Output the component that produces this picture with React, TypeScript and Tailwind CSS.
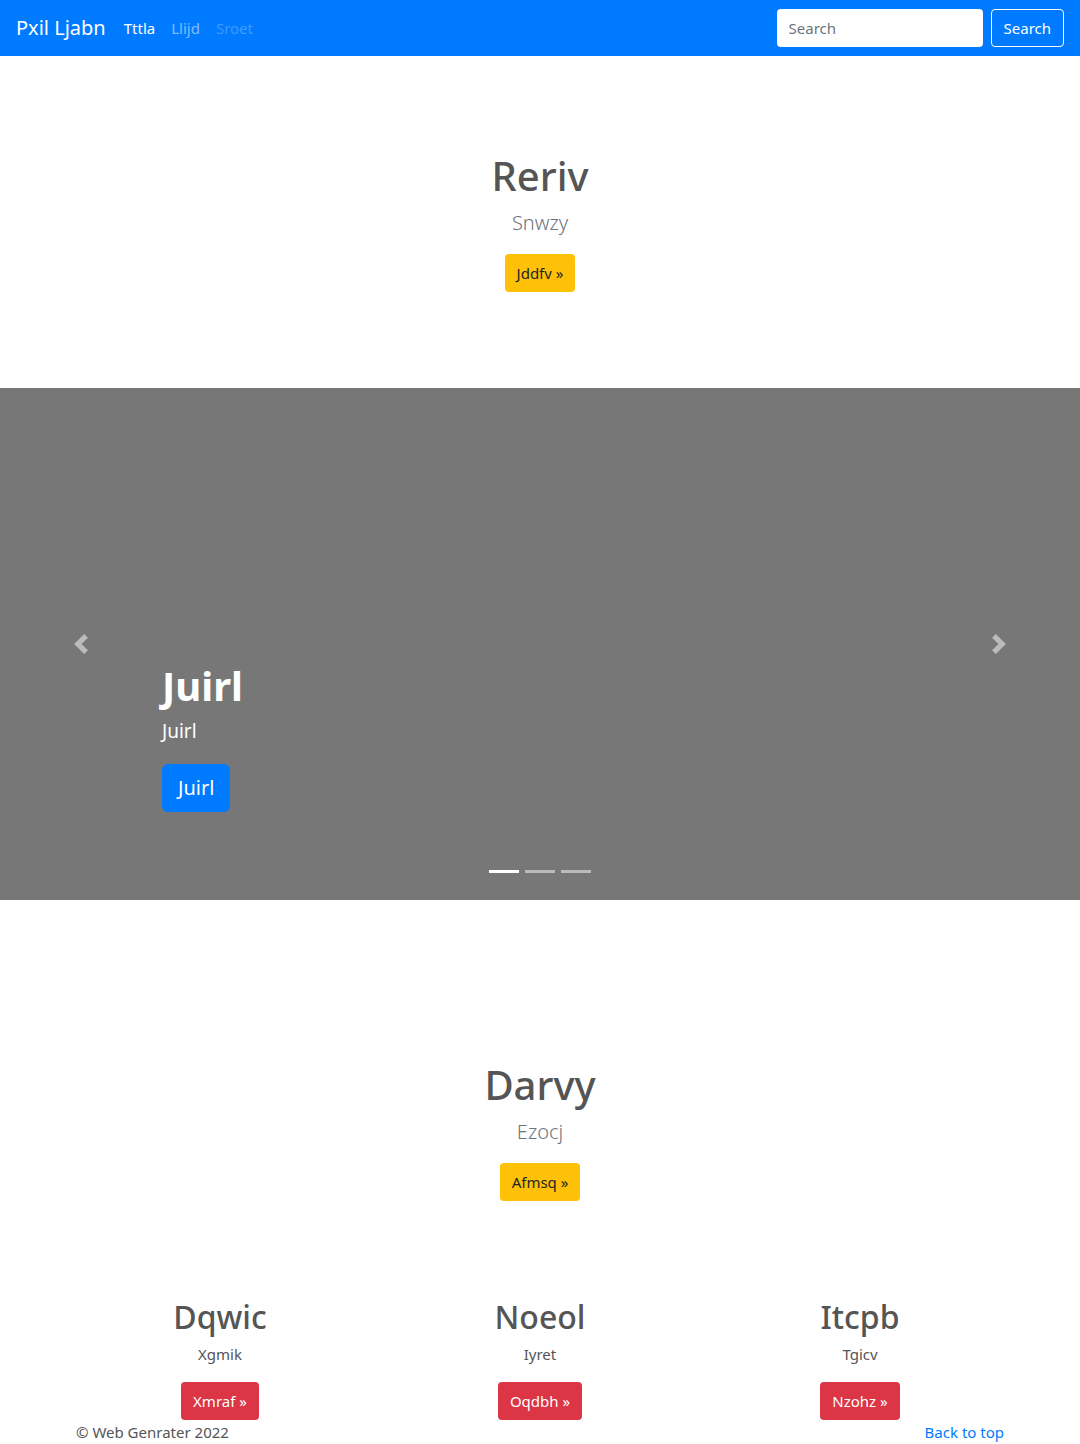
const font = "font-['Segoe_UI','Noto_Sans',sans-serif]";

type Col = { title: string; text: string; btn: string };

const COLS: Col[] = [
  { title: "Dqwic", text: "Xgmik", btn: "Xmraf »" },
  { title: "Noeol", text: "Iyret", btn: "Oqdbh »" },
  { title: "Itcpb", text: "Tgicv", btn: "Nzohz »" },
];

function Chevron({ dir }: { dir: "prev" | "next" }) {
  return (
    <svg width="20" height="20" viewBox="0 0 8 8" fill="#fff" className="opacity-50">
      {dir === "prev" ? (
        <path d="M5.25 0l-4 4 4 4 1.5-1.5L4.25 4l2.5-2.5L5.25 0z" />
      ) : (
        <path d="M2.75 0l-1.5 1.5L3.75 4l-2.5 2.5L2.75 8l4-4-4-4z" />
      )}
    </svg>
  );
}

function Hero({ title, lead, btn }: { title: string; lead: string; btn: string }) {
  return (
    <div className="flex flex-col items-center">
      <h1 className="text-[40px] leading-[48px] font-medium text-[#555] mb-2">{title}</h1>
      <p className="text-[20px] leading-[30px] font-light text-[#6c757d] mb-4">{lead}</p>
      <button className="h-[38px] px-3 rounded bg-[#ffc107] text-[#212529] text-[15px]">{btn}</button>
    </div>
  );
}

export default function App() {
  return (
    <div className={`${font} bg-white w-[1080px] h-[1444px] overflow-hidden`}>
      <nav className="h-14 bg-[#007bff] flex items-center px-4">
        <span className="text-white text-[20px] mr-[18px]">Pxil Ljabn</span>
        <div className="flex gap-4 text-[15px]">
          <span className="text-white">Tttla</span>
          <span className="text-white/50">Llijd</span>
          <span className="text-white/25">Sroet</span>
        </div>
        <div className="ml-auto flex items-center gap-2">
          <input
            placeholder="Search"
            className="w-[206px] h-[38px] rounded bg-white px-3 text-[15px] text-[#495057] placeholder:text-[#6c757d] outline-none"
          />
          <button className="h-[38px] px-3 rounded border border-white text-white text-[15px]">Search</button>
        </div>
      </nav>

      <section className="pt-24 pb-24">
        <Hero title="Reriv" lead="Snwzy" btn="Jddfv »" />
      </section>

      <div className="relative h-[512px] bg-[#777] flex items-center">
        <div className="w-[162px] flex justify-center">
          <Chevron dir="prev" />
        </div>
        <div className="flex-1" />
        <div className="w-[162px] flex justify-center">
          <Chevron dir="next" />
        </div>
        <div className="absolute left-[162px] bottom-[88px] flex flex-col items-start text-white">
          <h1 className="text-[40px] leading-[48px] font-bold mb-1.5">Juirl</h1>
          <p className="text-[19px] leading-[30px] mb-[18px]">Juirl</p>
          <button className="h-12 px-4 rounded-md bg-[#007bff] text-white text-[20px]">Juirl</button>
        </div>
        <div className="absolute bottom-[27px] left-0 right-0 flex justify-center gap-1.5">
          <span className="w-[30px] h-[3px] bg-white" />
          <span className="w-[30px] h-[3px] bg-white/50" />
          <span className="w-[30px] h-[3px] bg-white/50" />
        </div>
      </div>

      <section className="pt-[161px] pb-[97px]">
        <Hero title="Darvy" lead="Ezocj" btn="Afmsq »" />
      </section>

      <div className="w-[960px] mx-auto grid grid-cols-3">
        {COLS.map((c) => (
          <div key={c.title} className="flex flex-col items-center px-4">
            <h2 className="text-[32px] leading-[38px] font-medium text-[#555] mb-1.5">{c.title}</h2>
            <p className="text-[15px] leading-6 text-[#555] mb-4">{c.text}</p>
            <button className="h-[38px] px-3 rounded bg-[#dc3545] text-white text-[15px]">{c.btn}</button>
          </div>
        ))}
      </div>

      <footer className="w-[960px] mx-auto px-4 flex justify-between text-[15px] leading-6">
        <span className="text-[#555]">© Web Genrater 2022</span>
        <span className="text-[#007bff]">Back to top</span>
      </footer>
    </div>
  );
}
